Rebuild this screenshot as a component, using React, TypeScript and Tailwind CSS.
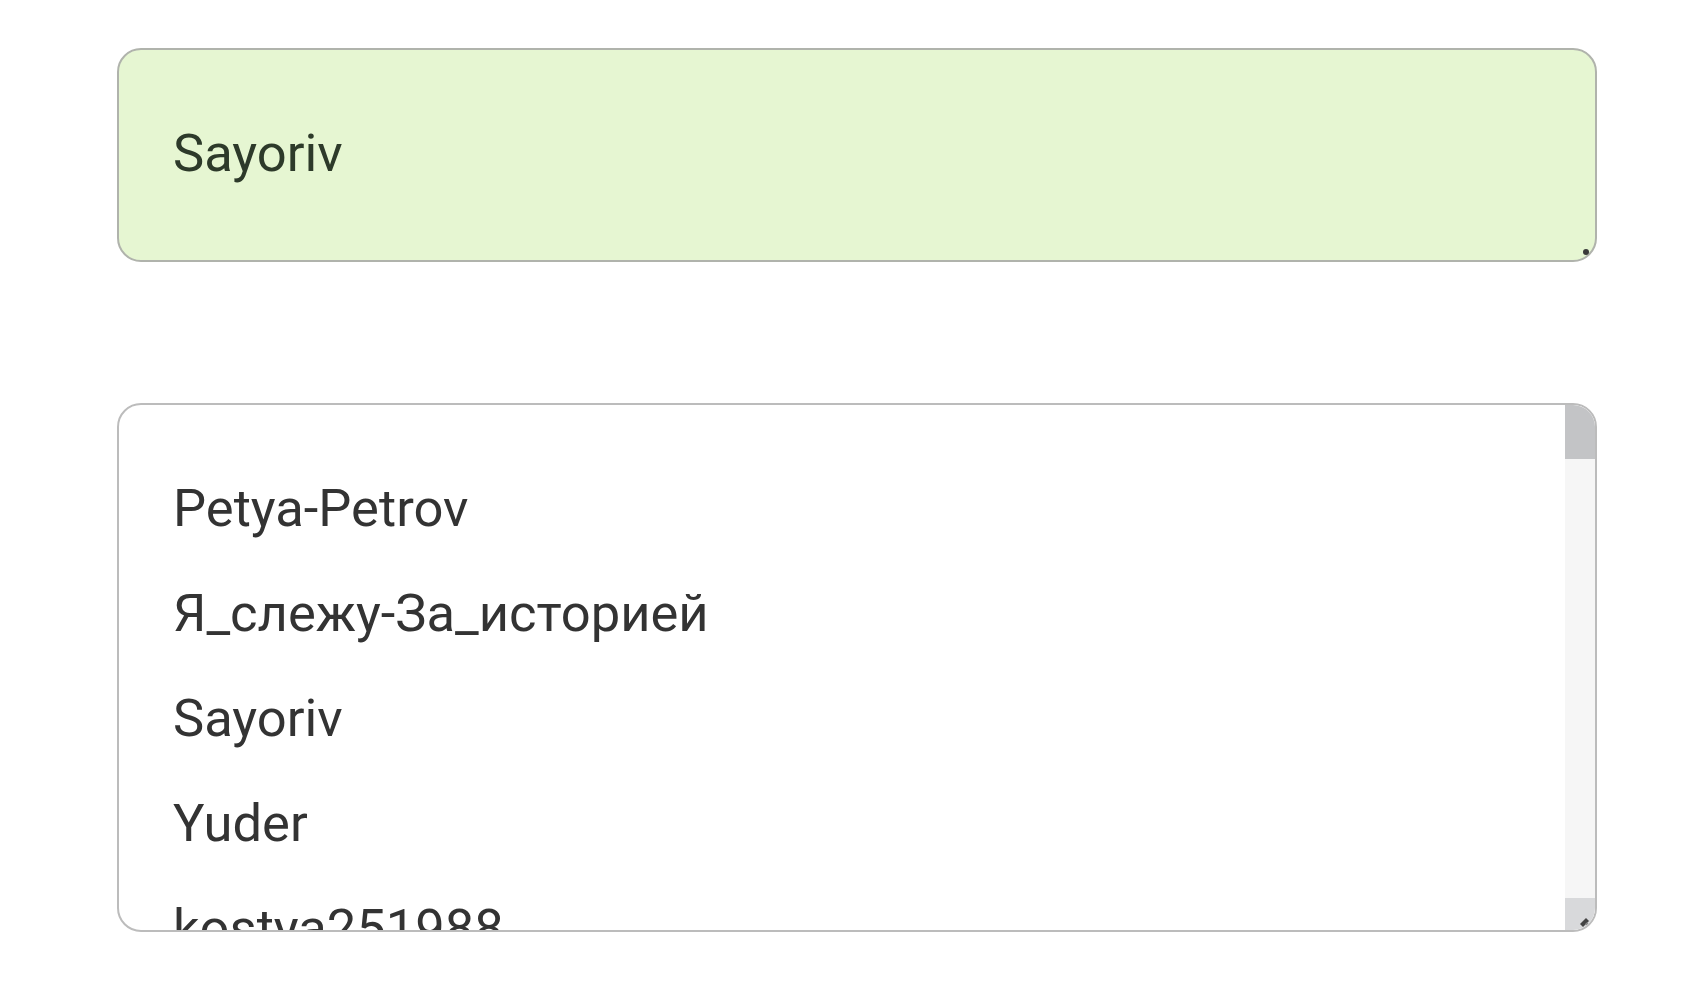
const users = ['Petya-Petrov', 'Я_слежу-За_историей', 'Sayoriv', 'Yuder', 'kostya251988'];

export default function App() {
  return (
    <div
      className="min-h-screen w-full bg-white pt-[48px]"
      style={{ fontFamily: 'Roboto, "Noto Sans", sans-serif' }}
    >
      {/* Selected value */}
      <div className="relative ml-[117px] flex h-[214px] w-[1480px] items-center rounded-[24px] border-2 border-[#b0b3ac] bg-[#e6f6d2] pb-[4px] pl-[54px]">
        <span className="text-[52.5px] leading-none text-[#2d3a2a]">Sayoriv</span>
        <span className="absolute bottom-[5px] right-[6px] h-[6px] w-[6px] rounded-full bg-[#3a3a3a]" />
      </div>

      {/* List */}
      <div className="relative ml-[117px] mt-[141px] h-[529px] w-[1480px] overflow-hidden rounded-[24px] border-2 border-[#bcbcbc] bg-white">
        <div className="pl-[54px] pt-[51px]">
          {users.map((u) => (
            <div key={u} className="h-[105px] text-[52.5px] leading-[105px] text-[#333333] whitespace-nowrap">
              {u}
            </div>
          ))}
        </div>

        {/* Scrollbar */}
        <div className="absolute right-0 top-0 flex h-full w-[30px] flex-col bg-[#f6f6f6]">
          <div className="h-[54px] w-full bg-[#c3c4c6]" />
          <div className="flex-1" />
          <div className="flex h-[32px] w-full items-end justify-end bg-[#d8d9db] pb-[3px] pr-[4px]">
            <svg width="14" height="14" viewBox="0 0 14 14">
              <path d="M3 11 L9 5 L12 8 L6 14 Z" fill="#444" />
              <circle cx="10" cy="11" r="1.6" fill="#888" />
            </svg>
          </div>
        </div>
      </div>
    </div>
  );
}
